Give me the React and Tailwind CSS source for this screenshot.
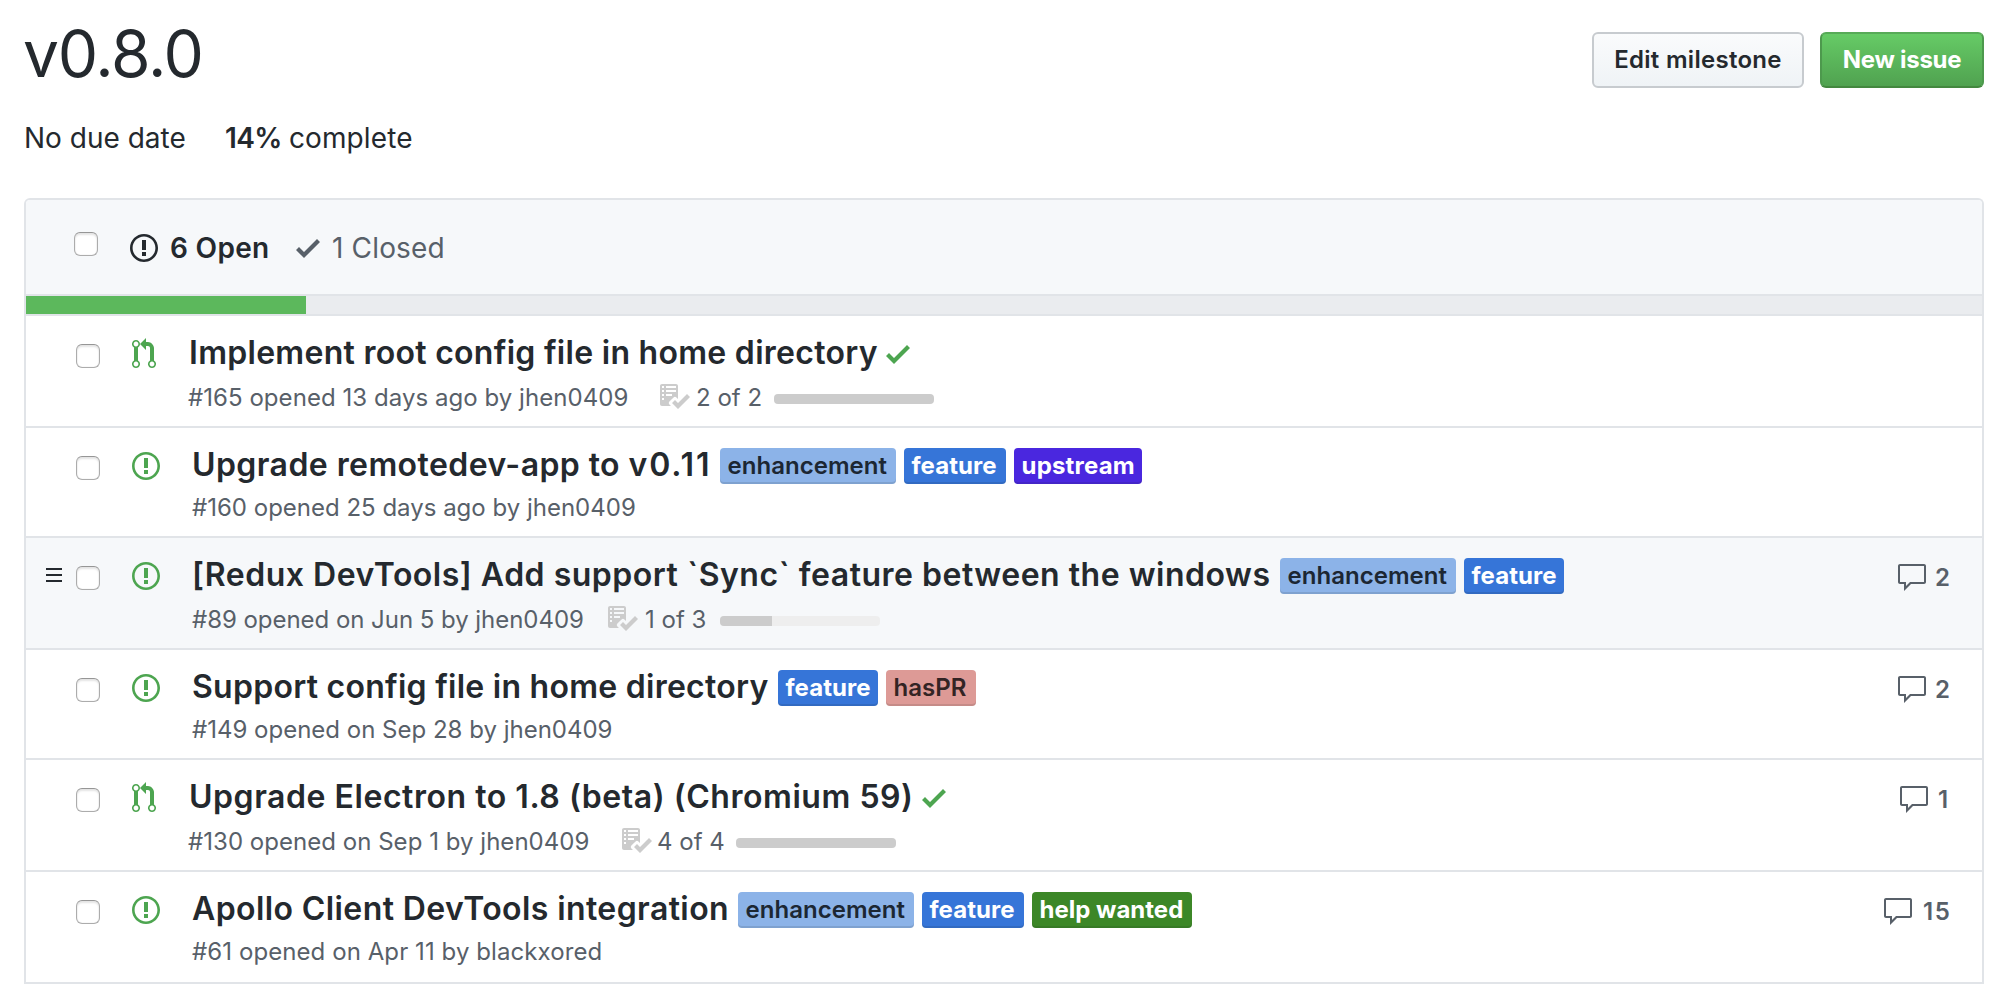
import React from "react";

const ICONS = {
  issue: {
    w: 14,
    d: "M7 2.3c3.14 0 5.7 2.56 5.7 5.7s-2.56 5.7-5.7 5.7A5.71 5.71 0 0 1 1.3 8c0-3.14 2.56-5.7 5.7-5.7zM7 1C3.14 1 0 4.14 0 8s3.14 7 7 7 7-3.14 7-7-3.14-7-7-7zm1 3H6v5h2V4zm0 6H6v2h2v-2z",
  },
  pull: {
    w: 12,
    d: "M11 11.28V5c-.03-.78-.34-1.47-.94-2.06C9.46 2.35 8.78 2.03 8 2H7V0L4 3l3 3V4h1c.27.02.48.11.69.31.21.2.3.42.31.69v6.28A1.993 1.993 0 0 0 10 15a1.993 1.993 0 0 0 1-3.72zm-1 2.92c-.66 0-1.2-.55-1.2-1.2 0-.65.55-1.2 1.2-1.2.65 0 1.2.55 1.2 1.2 0 .65-.55 1.2-1.2 1.2zM4 3c0-1.11-.89-2-2-2a1.993 1.993 0 0 0-1 3.72v6.56A1.993 1.993 0 0 0 2 15a1.993 1.993 0 0 0 1-3.72V4.72c.59-.34 1-.98 1-1.72zm-.8 10c0 .66-.55 1.2-1.2 1.2-.65 0-1.2-.55-1.2-1.2 0-.65.55-1.2 1.2-1.2.65 0 1.2.55 1.2 1.2zM2 4.2C1.34 4.2.8 3.65.8 3c0-.65.55-1.2 1.2-1.2.65 0 1.2.55 1.2 1.2 0 .65-.55 1.2-1.2 1.2z",
  },
  check: { w: 12, d: "M12 5l-8 8-4-4 1.5-1.5L4 10l6.5-6.5z" },
  comment: {
    w: 16,
    d: "M14 1H2c-.55 0-1 .45-1 1v8c0 .55.45 1 1 1h2v3.5L7.5 11H14c.55 0 1-.45 1-1V2c0-.55-.45-1-1-1zm0 9H7l-2 2v-2H2V2h12v8z",
  },
  checklist: {
    w: 16,
    d: "M16 8.5l-6 6-3-3L8.5 10l1.5 1.5L14.5 7 16 8.5zM5.7 12.2l.8.8H2c-.55 0-1-.45-1-1V3c0-.55.45-1 1-1h7c.55 0 1 .45 1 1v6.5l-.8-.8c-.39-.39-1.03-.39-1.42 0L5.7 10.8a.996.996 0 0 0 0 1.41v-.01zM4 4h5V3H4v1zm0 2h5V5H4v1zm0 2h3V7H4v1zM3 9H2v1h1V9zm0-2H2v1h1V7zm0-2H2v1h1V5zm0-2H2v1h1V3z",
  },
};

function Octicon({ name, className = "" }) {
  const { w, d } = ICONS[name];
  return (
    <svg
      width={w * 2}
      height={32}
      viewBox={`0 0 ${w} 16`}
      fill="currentColor"
      fillRule="evenodd"
      className={`shrink-0 ${className}`}
    >
      <path d={d} />
    </svg>
  );
}

function Checkbox({ className = "" }) {
  return (
    <span
      role="checkbox"
      aria-checked="false"
      className={`block size-6 shrink-0 rounded-[6px] border border-[#acacac] border-t-[#969696] bg-white shadow-[inset_0_2px_2px_#e4e4e4,inset_0_0_1px_#c4c4c4] ${className}`}
    />
  );
}

const LABELS = {
  enhancement: "w-44 bg-[#8cb3e8] text-[#1c2733] font-semibold tracking-[0.03px]",
  feature: "bg-[#3675d8] text-white font-bold tracking-[0.05px]",
  upstream: "w-32 bg-[#4a27df] text-white font-bold tracking-[0.2px]",
  hasPR: "w-[90px] bg-[#dd9a96] text-[#332424] font-semibold",
  "help wanted": "w-40 bg-[#3c8727] text-white font-bold",
};

function Label({ name, className = "" }) {
  return (
    <span
      className={`h-9 shrink-0 rounded-[4px] px-[7.5px] text-2xl leading-9 whitespace-nowrap shadow-[inset_0_-2px_0_rgba(27,31,35,0.12)] ${LABELS[name]} ${className}`}
    >
      {name}
    </span>
  );
}

const ISSUES = [
  {
    type: "pull",
    title: "Implement root config file in home directory",
    titleClass: "w-[698px] pl-px tracking-[0.283px]",
    passed: true,
    meta: "#165 opened 13 days ago by jhen0409",
    metaClass: "w-[470px] tracking-[0.05px]",
    tasks: { done: 2, total: 2 },
    tasksClass: "w-[78px]",
  },
  {
    type: "issue",
    title: "Upgrade remotedev-app to ",
    version: "v0.11",
    titleClass: "w-[528px] tracking-[0.42px]",
    labels: ["enhancement", "feature", "upstream"],
    featureClass: "w-[102px]",
    meta: "#160 opened 25 days ago by jhen0409",
    metaClass: "",
  },
  {
    type: "issue",
    hovered: true,
    title: "[Redux DevTools] Add support `Sync` feature between the windows",
    titleClass: "w-[1088px] tracking-[0.506px]",
    labels: ["enhancement", "feature"],
    featureClass: "w-[100px]",
    meta: "#89 opened on Jun 5 by jhen0409",
    metaClass: "w-[414px] tracking-[-0.043px]",
    tasks: { done: 1, total: 3 },
    tasksClass: "w-[76px] pl-px",
    comments: 2,
    commentsClass: "w-[15px]",
  },
  {
    type: "issue",
    title: "Support config file in home directory",
    titleClass: "w-[586px] tracking-[0.26px]",
    labels: ["feature", "hasPR"],
    featureClass: "w-[100px]",
    meta: "#149 opened on Sep 28 by jhen0409",
    metaClass: "",
    comments: 2,
    commentsClass: "w-[15px]",
  },
  {
    type: "pull",
    title: "Upgrade Electron to 1.8 (beta) (Chromium 59)",
    titleClass: "w-[734px] pl-px tracking-[0.54px]",
    passed: true,
    meta: "#130 opened on Sep 1 by jhen0409",
    metaClass: "w-[432px] tracking-[0.033px]",
    tasks: { done: 4, total: 4 },
    tasksClass: "w-[78px] -indent-px",
    comments: 1,
    commentsClass: "w-[13px] pl-px",
  },
  {
    type: "issue",
    title: "Apollo Client DevTools integration",
    titleClass: "w-[546px] tracking-[0.401px]",
    labels: ["enhancement", "feature", "help wanted"],
    featureClass: "w-[102px]",
    meta: "#61 opened on Apr 11 by blackxored",
    metaClass: "tracking-[0.08px]",
    comments: 15,
    commentsClass: "w-[29px] pl-0.5 tracking-[1.5px]",
  },
];

function Row({ issue }) {
  const { tasks } = issue;
  return (
    <li
      className={`flex items-start border-b-2 border-[#e1e4e8] last:h-28 ${tasks ? "h-28" : "h-[110px]"} ${issue.hovered ? "bg-[#f6f8fa]" : "bg-white"}`}
    >
      <div className="flex w-[50px] shrink-0 justify-end pt-[30px] pr-[14px]">
        {issue.hovered && (
          <div className="flex w-4 flex-col gap-1">
            <span className="h-0.5 bg-[#24292e]" />
            <span className="h-0.5 bg-[#24292e]" />
            <span className="h-0.5 bg-[#24292e]" />
          </div>
        )}
      </div>
      <Checkbox className="mt-7" />
      <Octicon name={issue.type} className="mt-[22px] ml-8 text-[#4da550]" />
      <div className="ml-8 flex-1 pt-4">
        <div className="flex h-10 items-start">
          <h2
            className={`mt-px shrink-0 text-[32px] leading-10 font-semibold whitespace-nowrap text-[#24292e] ${issue.titleClass}`}
          >
            {issue.title}
            {issue.version && <span className="tracking-[1.9px]">{issue.version}</span>}
          </h2>
          {issue.passed && <Octicon name="check" className="mt-1.5 text-[#4da550]" />}
          {issue.labels && (
            <div className="flex gap-2 pt-1">
              {issue.labels.map((name) => (
                <Label
                  key={name}
                  name={name}
                  className={name === "feature" ? issue.featureClass : ""}
                />
              ))}
            </div>
          )}
        </div>
        <div
          className={`flex items-start text-2xl leading-9 whitespace-nowrap text-[#586069] ${tasks ? "mt-2" : "mt-1.5"}`}
        >
          <span className={`shrink-0 ${issue.metaClass}`}>{issue.meta}</span>
          {tasks && (
            <>
              <Octicon name="checklist" className="text-[#cccccc]" />
              <span className={`ml-1.5 shrink-0 ${issue.tasksClass}`}>
                {tasks.done} of {tasks.total}
              </span>
              <span className="mt-[14px] block h-2.5 w-40 overflow-hidden rounded-[4px] bg-[#eeeeee]">
                <span
                  className="block h-full bg-[#cccccc]"
                  style={{ width: `${Math.floor((tasks.done / tasks.total) * 80) * 2}px` }}
                />
              </span>
            </>
          )}
        </div>
      </div>
      {issue.comments && (
        <div className="flex shrink-0 items-start pt-6 pr-8 text-[#586069]">
          <Octicon name="comment" />
          <span
            className={`-mt-0.5 ml-[7px] text-2xl leading-9 font-semibold ${issue.commentsClass}`}
          >
            {issue.comments}
          </span>
        </div>
      )}
    </li>
  );
}

export default function App() {
  return (
    <main className="min-h-[1000px] bg-white pr-[22px] pl-6 font-['Inter','Liberation_Sans',sans-serif] text-[#24292e]">
      <header className="flex h-[118px] items-start justify-between">
        <h1 className="mt-[14px] -ml-px text-[64px] leading-[80px] font-normal tracking-[-1.25px]">
          v0.8.0
        </h1>
        <div className="flex gap-4 pt-8 text-2xl whitespace-nowrap">
          <button className="h-14 w-[212px] rounded-[6px] border-2 border-[#c7cbcf] bg-linear-to-b from-[#fafbfc] to-[#eff3f6] leading-[52px] font-semibold tracking-[0.278px]">
            Edit milestone
          </button>
          <button className="h-14 w-[164px] rounded-[6px] border-2 border-x-[#4d994d] border-t-[#57aa57] border-b-[#43883f] bg-linear-to-b from-[#66cb66] to-[#50a250] leading-[52px] font-bold tracking-[-0.25px] text-white">
            New issue
          </button>
        </div>
      </header>

      <div className="flex h-20 text-[28px] leading-10">
        <span className="w-[201px]">No due date</span>
        <span className="w-[64px] font-semibold tracking-[-0.6px]">14%</span>
        <span className="tracking-[0.1px]">complete</span>
      </div>

      <section className="rounded-t-[6px] border-2 border-b-0 border-[#e1e4e8]">
        <div className="flex h-24 items-start rounded-t-[4px] border-b-2 border-[#e1e4e8] bg-[#f6f8fa] pl-12 text-[28px] leading-10">
          <Checkbox className="mt-8" />
          <Octicon name="issue" className="mt-8 ml-8" />
          <span className="mt-7 ml-3 w-[126px] font-semibold tracking-[0.297px]">6 Open</span>
          <Octicon name="check" className="mt-8 text-[#586069]" />
          <span className="mt-7 ml-3 tracking-[0.158px] text-[#586069]">1 Closed</span>
        </div>
        <div className="h-5 border-b-2 border-[#e1e4e8] bg-[#eaecef]">
          <div className="h-full w-[280px] bg-[#5cb85c]" />
        </div>
        <ul>
          {ISSUES.map((issue) => (
            <Row key={issue.meta} issue={issue} />
          ))}
        </ul>
      </section>
    </main>
  );
}
